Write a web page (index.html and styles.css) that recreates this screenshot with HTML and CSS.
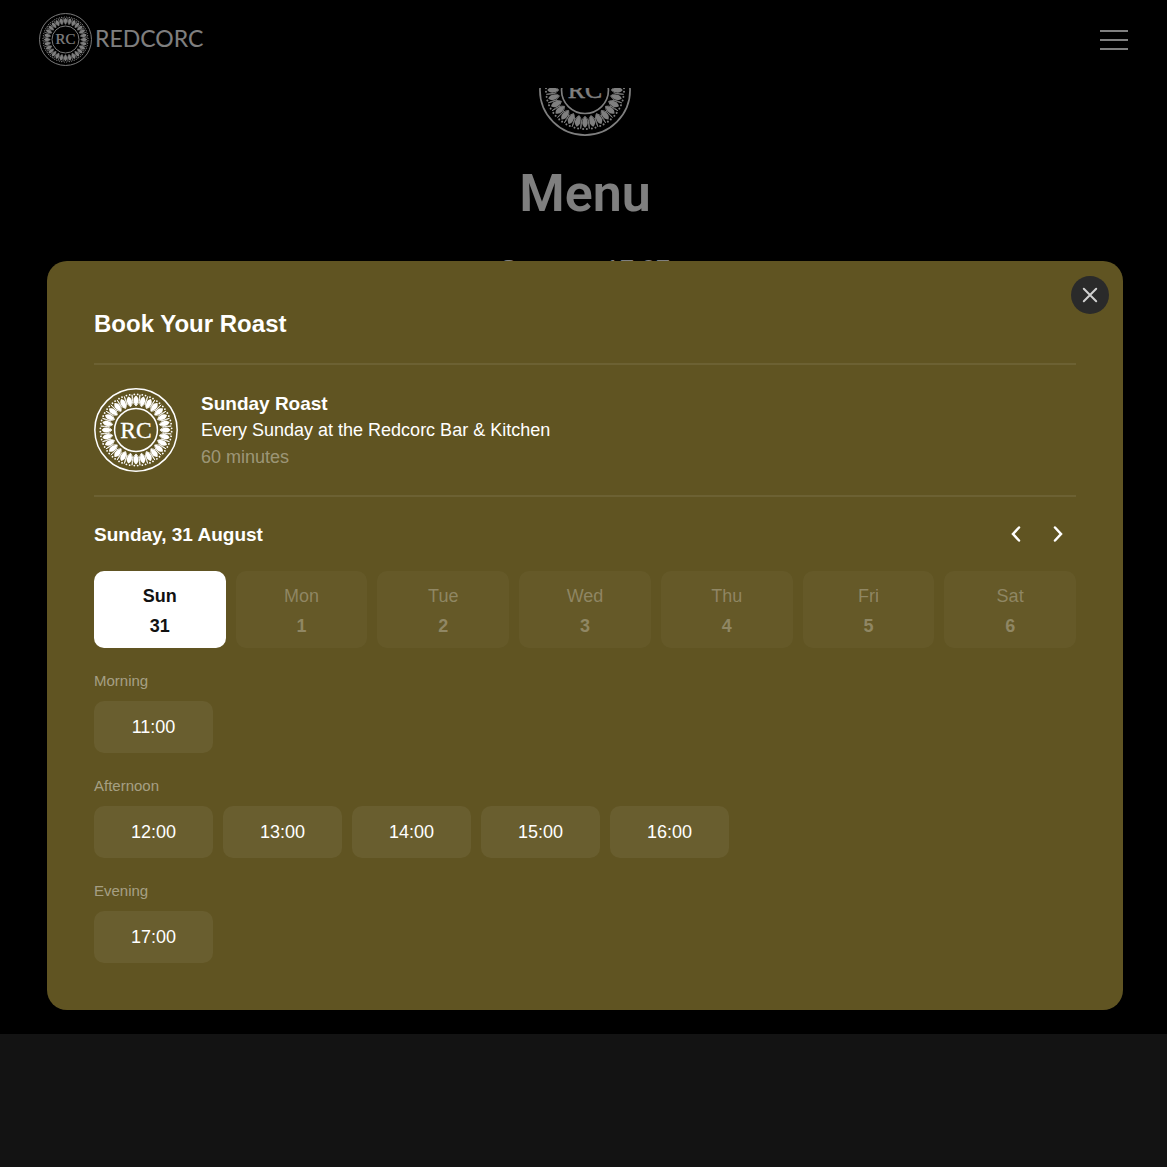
FILE: index.html
```
<!DOCTYPE html>
<html lang="en">
<head>
    <meta charset="UTF-8">
    <meta name="viewport" content="width=device-width, initial-scale=1.0">
    <title>Redcorc - Menu</title>
    <link rel="stylesheet" href="styles.css">
</head>
<body>
    <!-- Seal logo, reused in the header, hero and booking modal -->
    <svg class="sprite" aria-hidden="true">
        <defs>
            <g id="leaf">
                <path d="M50 9 C54.2 12 53.8 17 50 21.5 C46.2 17 45.8 12 50 9Z" fill="currentColor"/>
                <path d="M50 21.5 Q55.4 17 54.6 8 M50 21.5 Q44.6 17 45.4 8" fill="none" stroke="currentColor" stroke-width="0.9"/>
                <circle cx="48" cy="7.6" r="1.1" fill="currentColor"/>
                <circle cx="52" cy="7.6" r="1.1" fill="currentColor"/>
            </g>
            <g id="quarter">
                <use href="#leaf"/>
                <use href="#leaf" transform="rotate(12.857 50 50)"/>
                <use href="#leaf" transform="rotate(25.714 50 50)"/>
                <use href="#leaf" transform="rotate(38.571 50 50)"/>
                <use href="#leaf" transform="rotate(51.429 50 50)"/>
                <use href="#leaf" transform="rotate(64.286 50 50)"/>
                <use href="#leaf" transform="rotate(77.143 50 50)"/>
            </g>
            <symbol id="seal" viewBox="0 0 100 100">
                <circle cx="50" cy="50" r="49" fill="none" stroke="currentColor" stroke-width="1.8"/>
                <circle cx="50" cy="50" r="25.5" fill="none" stroke="currentColor" stroke-width="1.8"/>
                <use href="#quarter"/>
                <use href="#quarter" transform="rotate(90 50 50)"/>
                <use href="#quarter" transform="rotate(180 50 50)"/>
                <use href="#quarter" transform="rotate(270 50 50)"/>
                <text x="50" y="59" text-anchor="middle" font-family="Liberation Serif, serif" font-size="28" fill="currentColor" stroke="currentColor" stroke-width="0.4">RC</text>
            </symbol>
        </defs>
    </svg>

    <header class="header">
        <a class="brand" href="#">
            <svg class="brandSeal" aria-hidden="true"><use href="#seal"/></svg>
            <span>REDCORC</span>
        </a>
        <button type="button" class="menuBtn" aria-label="Open menu">
            <span></span>
            <span></span>
            <span></span>
        </button>
    </header>

    <main class="hero">
        <svg class="heroSeal" aria-hidden="true"><use href="#seal"/></svg>
        <h1>Menu</h1>
        <p>Summer 17.07</p>
    </main>

    <footer class="footer"></footer>

    <div class="overlay">
        <section class="modal" role="dialog" aria-modal="true" aria-labelledby="modalTitle">
            <button type="button" class="close" aria-label="Close">
                <svg viewBox="0 0 16 16" width="16" height="16" fill="none" stroke="currentColor" stroke-width="2" stroke-linecap="round"><path d="M1.8 1.8 14.2 14.2M14.2 1.8 1.8 14.2"/></svg>
            </button>
            <h2 class="title" id="modalTitle">Book Your Roast</h2>

            <div class="service">
                <svg class="serviceSeal" aria-hidden="true"><use href="#seal"/></svg>
                <div>
                    <h3>Sunday Roast</h3>
                    <p>Every Sunday at the Redcorc Bar &amp; Kitchen</p>
                    <p class="duration">60 minutes</p>
                </div>
            </div>

            <div class="dateBar">
                <h3>Sunday, 31 August</h3>
                <div class="arrows">
                    <button type="button" aria-label="Previous week">
                        <svg viewBox="0 0 10 16" width="10" height="16"><path d="M8 1.5 2 8l6 6.5"/></svg>
                    </button>
                    <button type="button" aria-label="Next week">
                        <svg viewBox="0 0 10 16" width="10" height="16"><path d="M2 1.5 8 8l-6 6.5"/></svg>
                    </button>
                </div>
            </div>

            <div class="days">
                <button type="button" class="day selected">Sun<b>31</b></button>
                <button type="button" class="day" disabled>Mon<b>1</b></button>
                <button type="button" class="day" disabled>Tue<b>2</b></button>
                <button type="button" class="day" disabled>Wed<b>3</b></button>
                <button type="button" class="day" disabled>Thu<b>4</b></button>
                <button type="button" class="day" disabled>Fri<b>5</b></button>
                <button type="button" class="day" disabled>Sat<b>6</b></button>
            </div>

            <h4>Morning</h4>
            <div class="slots">
                <button type="button">11:00</button>
            </div>

            <h4>Afternoon</h4>
            <div class="slots">
                <button type="button">12:00</button>
                <button type="button">13:00</button>
                <button type="button">14:00</button>
                <button type="button">15:00</button>
                <button type="button">16:00</button>
            </div>

            <h4>Evening</h4>
            <div class="slots">
                <button type="button">17:00</button>
            </div>
        </section>
    </div>
</body>
</html>
```
FILE: styles.css
```
* {
    box-sizing: border-box;
}
body {
    min-height: 100vh;
    margin: 0;
    display: flex;
    flex-direction: column;
    font-family: "Liberation Sans", Arial, sans-serif;
    font-size: 18px;
    color: white;
    background: black;
}
h1, h2, h3, h4, p {
    margin: 0;
}
button {
    padding: 0;
    border: 0;
    font: inherit;
    color: inherit;
    background: none;
    cursor: pointer;
}
svg {
    display: block;
}
.sprite {
    position: absolute;
    width: 0;
    height: 0;
}

/* Header */
.header {
    position: sticky;
    top: 0;
    z-index: 1;
    display: flex;
    justify-content: space-between;
    align-items: center;
    height: 88px;
    padding: 0 39px 9px;
    background: black;
}
.brand {
    display: flex;
    align-items: center;
    gap: 3px;
    font-family: Lato, sans-serif;
    font-size: 23px;
    color: white;
    text-decoration: none;
}
.brand span {
    padding-bottom: 3px;
}
.brandSeal {
    width: 53px;
    height: 53px;
}
.menuBtn {
    display: flex;
    flex-direction: column;
    gap: 7px;
    width: 28px;
}
.menuBtn span {
    height: 2px;
    background: white;
}

/* Hero */
.hero {
    display: flex;
    flex-direction: column;
    align-items: center;
    height: 990px;
    margin-top: -44px;
    padding-left: 3px;
}
.heroSeal {
    width: 92px;
    height: 92px;
}
.hero h1 {
    margin-top: 28px;
    font-family: Roboto, sans-serif;
    font-size: 52px;
    font-weight: 600;
    line-height: 60px;
}
.hero p {
    margin-top: 30px;
    font-size: 26px;
    line-height: 30px;
}
.footer {
    flex: 1;
    background: #262626;
}

/* Booking modal */
.overlay {
    position: fixed;
    inset: 0;
    z-index: 2;
    padding: 261px 44px 0 47px;
    background: rgba(0, 0, 0, 0.5);
}
.modal {
    position: relative;
    padding: 48px 47px 47px;
    border-radius: 20px;
    background: #605422;
}
.close {
    position: absolute;
    top: 15px;
    right: 14px;
    display: flex;
    justify-content: center;
    align-items: center;
    width: 38px;
    height: 38px;
    border-radius: 50%;
    color: #d0d0d0;
    background: #2a2a2a;
}
.title {
    padding-bottom: 24px;
    border-bottom: 2px solid rgba(255, 255, 255, 0.08);
    font-size: 24px;
    line-height: 30px;
}
.modal h3 {
    font-size: 19px;
    line-height: 27px;
}
.service {
    display: flex;
    align-items: center;
    gap: 23px;
    padding: 23px 0;
    border-bottom: 2px solid rgba(255, 255, 255, 0.08);
    line-height: 27px;
}
.serviceSeal {
    width: 84px;
    height: 84px;
}
.duration {
    color: rgba(255, 255, 255, 0.4);
}
.dateBar {
    display: flex;
    justify-content: space-between;
    align-items: center;
    padding: 23px 0;
}
.arrows {
    display: flex;
    gap: 14px;
    padding-right: 4px;
}
.arrows button {
    display: flex;
    justify-content: center;
    align-items: center;
    width: 28px;
    height: 28px;
}
.arrows path {
    fill: none;
    stroke: white;
    stroke-width: 2.5;
    stroke-linecap: round;
}
.days {
    display: grid;
    grid-template-columns: repeat(7, 1fr);
    gap: 10px;
}
.day {
    padding: 10px 0 7px;
    border-radius: 10px;
    line-height: 30px;
    color: rgba(255, 255, 255, 0.28);
    background: rgba(255, 255, 255, 0.03);
}
.day b {
    display: block;
}
.day.selected {
    font-weight: bold;
    color: #111;
    background: white;
}
.modal h4 {
    margin: 23px 0 10px;
    font-size: 15px;
    font-weight: normal;
    line-height: 20px;
    color: rgba(255, 255, 255, 0.45);
}
.slots {
    display: flex;
    flex-wrap: wrap;
    gap: 10px;
}
.slots button {
    width: 119px;
    height: 52px;
    border-radius: 10px;
    background: rgba(255, 255, 255, 0.06);
}
```
